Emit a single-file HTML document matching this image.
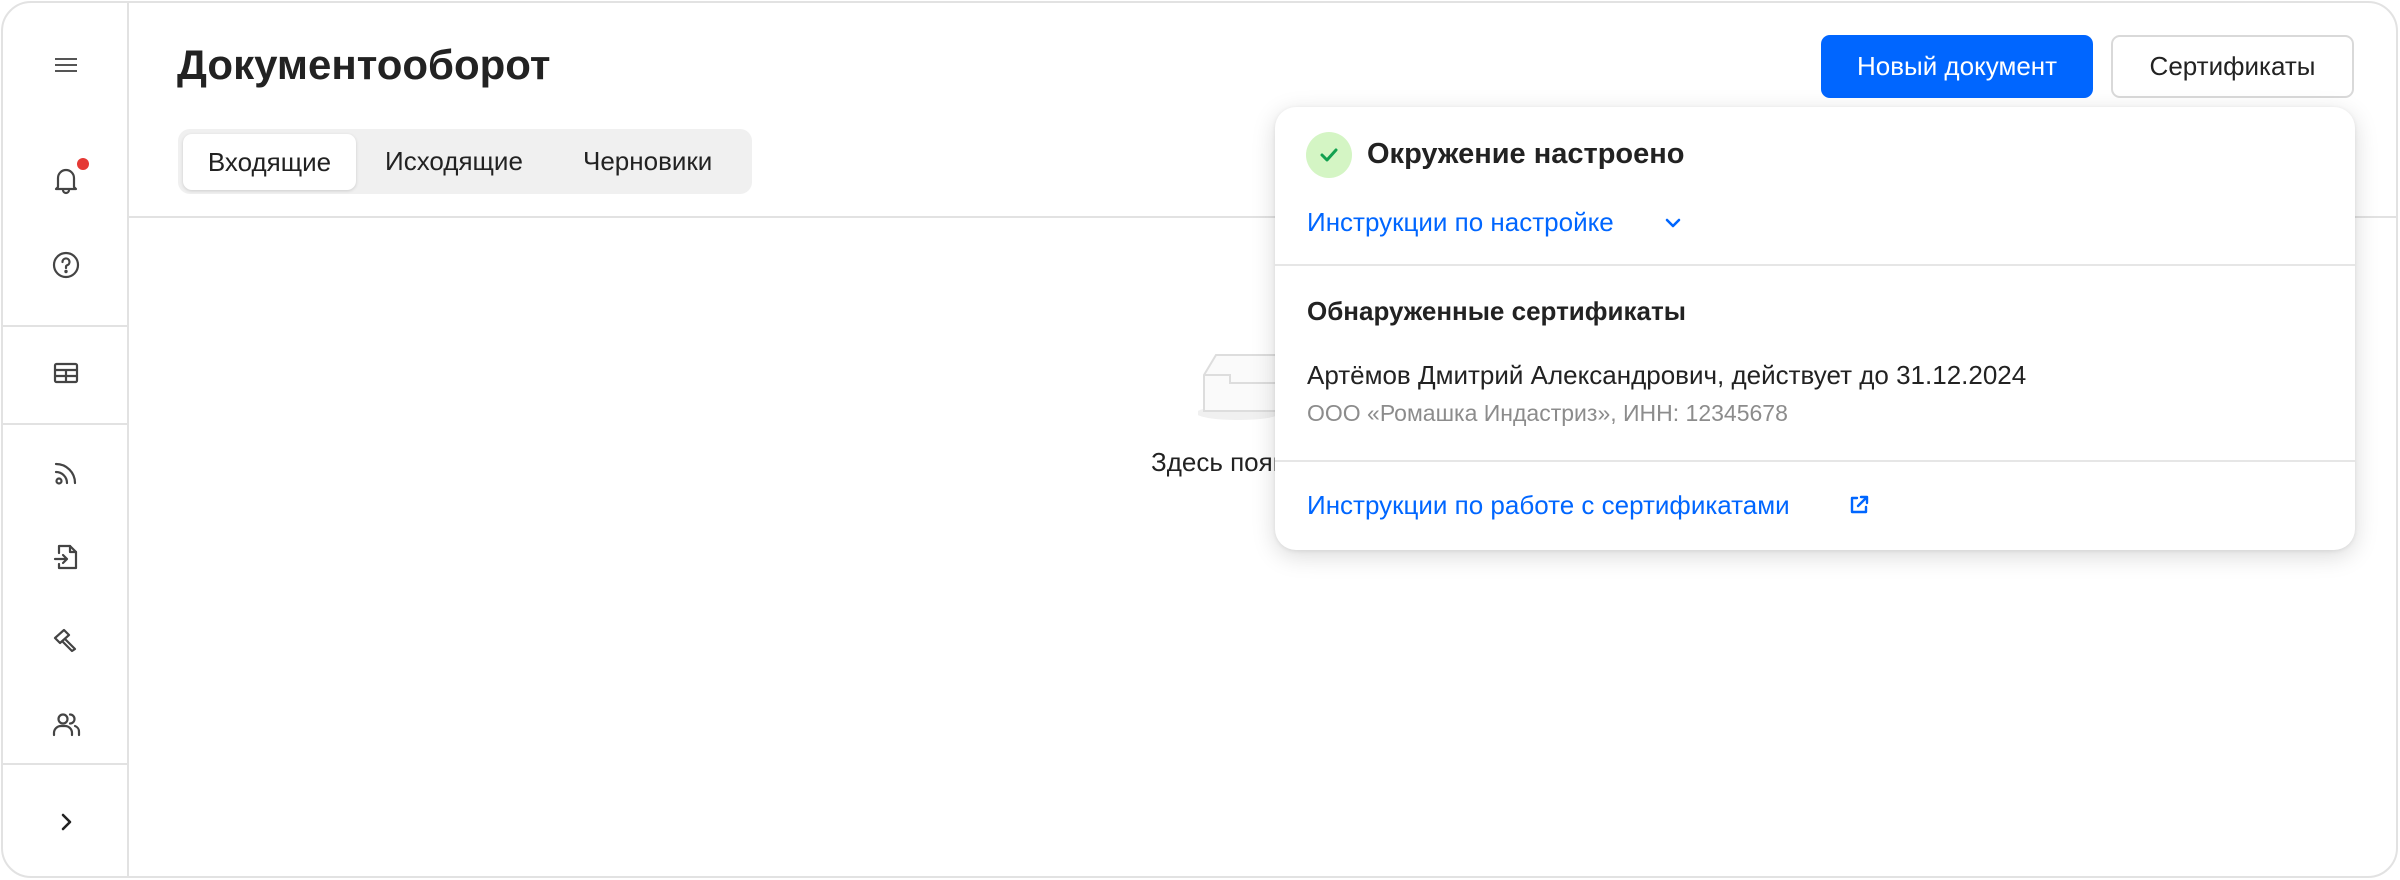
<!DOCTYPE html>
<html><head><meta charset="utf-8"><style>
*{box-sizing:border-box;margin:0;padding:0}
body{width:2400px;height:880px;background:#fff;font-family:"Liberation Sans",sans-serif;color:#222;position:relative;overflow:hidden}
.frame{position:absolute;left:1px;top:1px;width:2397px;height:877px;border:2px solid #e2e2e2;border-radius:30px;overflow:hidden}
.side{position:absolute;left:0;top:0;width:126px;height:100%;border-right:2px solid #e2e2e2}
.hr{position:absolute;left:0;width:126px;height:2px;background:#e2e2e2}
.ic{position:absolute;left:48px;width:30px;height:30px}
.abs{position:absolute;white-space:nowrap}
.tabs{position:absolute;left:175px;top:126px;width:574px;height:65px;background:#f0f0f0;border-radius:12px}
.tab{position:absolute;top:0;height:65px;line-height:65px;font-size:26px;color:#222}
.btn{position:absolute;top:32px;height:63px;border-radius:9px;font-size:26px;line-height:63px;text-align:center}
.pop{position:absolute;left:1272px;top:104px;width:1080px;height:443px;background:#fff;border-radius:21px;box-shadow:0 6px 24px rgba(0,0,0,.15),0 1px 4px rgba(0,0,0,.08)}
.blue{color:#0066ff}
</style></head><body>
<div class="frame">
<div class="side">
 <svg class="ic" style="top:47px" viewBox="0 0 30 30" fill="none" stroke="#555" stroke-width="2"><path d="M4 9h22M4 15h22M4 21h22"/></svg>
 <svg class="ic" style="top:162px" viewBox="0 0 30 30" fill="none" stroke="#444" stroke-width="2.2" stroke-linecap="round" stroke-linejoin="round"><path d="M7 22V13a8 8 0 0 1 16 0v9l2 2H5z"/><path d="M12 25a3 3 0 0 0 6 0"/></svg>
 <div class="abs" style="left:74px;top:155px;width:12px;height:12px;border-radius:50%;background:#e53935"></div>
 <svg class="ic" style="top:247px" viewBox="0 0 30 30" fill="none" stroke="#444" stroke-width="2.2" stroke-linecap="round"><circle cx="15" cy="15" r="12"/><path d="M11.5 12a3.5 3.5 0 1 1 4.5 3.3c-.7.3-1 .9-1 1.7v1"/><circle cx="15" cy="21.5" r=".6" fill="#444"/></svg>
 <div class="hr" style="top:322px"></div>
 <svg class="ic" style="top:355px" viewBox="0 0 30 30" fill="none" stroke="#444" stroke-width="2.2"><rect x="4" y="6" width="22" height="18" rx="1.5"/><path d="M4 12h22M4 18h22M15 12v12"/></svg>
 <div class="hr" style="top:420px"></div>
 <svg class="ic" style="top:455px" viewBox="0 0 30 30" fill="none" stroke="#444" stroke-width="2.2" stroke-linecap="round"><circle cx="8" cy="23" r="2.5"/><path d="M5 14a11 11 0 0 1 11 11M5 6a19 19 0 0 1 19 19"/></svg>
 <svg class="ic" style="top:539px" viewBox="0 0 30 30" fill="none" stroke="#444" stroke-width="2.2" stroke-linejoin="round" stroke-linecap="round"><path d="M8 11V4h11l6 6v16H8v-4"/><path d="M19 4v6h6"/><path d="M4 17h12M12 13l4 4-4 4"/></svg>
 <svg class="ic" style="top:622px" viewBox="0 0 30 30" fill="none" stroke="#444" stroke-width="2.2" stroke-linejoin="round"><path d="M4 13l9-8 5 5-9 8z"/><path d="M14 14l10 10-3 2-10-10"/></svg>
 <svg class="ic" style="top:706px" viewBox="0 0 30 30" fill="none" stroke="#444" stroke-width="2.2" stroke-linecap="round"><circle cx="12" cy="10" r="4.5"/><path d="M3 26v-2a7 7 0 0 1 7-7h4a7 7 0 0 1 7 7v2"/><path d="M19 5.5a4.5 4.5 0 0 1 0 9M24 17a6 6 0 0 1 4 6v3"/></svg>
 <div class="hr" style="top:760px"></div>
 <svg class="ic" style="top:804px" viewBox="0 0 30 30" fill="none" stroke="#222" stroke-width="2.6" stroke-linecap="round" stroke-linejoin="round"><path d="M12 8l7 7-7 7"/></svg>
</div>
<div class="abs" style="left:174px;top:38px;font-size:42px;font-weight:bold;color:#222">Документооборот</div>
<div class="tabs">
 <div class="tab" style="left:5px;top:5px;width:173px;height:56px;line-height:56px;background:#fff;border-radius:9px;box-shadow:0 1px 3px rgba(0,0,0,.15);text-align:center">Входящие</div>
 <div class="tab" style="left:207px">Исходящие</div>
 <div class="tab" style="left:405px">Черновики</div>
</div>
<div class="abs" style="left:126px;top:213px;width:2300px;height:2px;background:#e2e2e2"></div>
<div class="btn" style="left:1818px;width:272px;background:#0066ff;color:#fff">Новый документ</div>
<div class="btn" style="left:2108px;width:243px;border:2px solid #d9d9d9;color:#222;line-height:59px">Сертификаты</div>
<svg class="abs" style="left:1195px;top:340px" width="80" height="80" viewBox="0 0 80 80"><ellipse cx="40" cy="70" rx="42" ry="7" fill="#f0f0f0"/><path d="M6 32l12-20h60v56H6z" fill="#fafafa" stroke="#ddd" stroke-width="2"/><path d="M6 32h26v8h46" fill="none" stroke="#ddd" stroke-width="2"/></svg>
<div class="abs" style="left:1148px;top:444px;font-size:26px;color:#222">Здесь появятся документы</div>
<div class="pop">
 <div class="abs" style="left:31px;top:25px;width:46px;height:46px;border-radius:50%;background:#d4f5c4"></div>
 <svg class="abs" style="left:42px;top:36px" width="24" height="24" viewBox="0 0 24 24" fill="none" stroke="#12a150" stroke-width="3" stroke-linecap="round" stroke-linejoin="round"><path d="M5 12l5 5 9-10"/></svg>
 <div class="abs" style="left:92px;top:31px;font-size:29px;font-weight:bold;color:#222">Окружение настроено</div>
 <div class="abs blue" style="left:32px;top:100px;font-size:26px">Инструкции по настройке</div>
 <svg class="abs" style="left:388px;top:106px" width="20" height="20" viewBox="0 0 20 20" fill="none" stroke="#0066ff" stroke-width="2.6" stroke-linecap="round" stroke-linejoin="round"><path d="M4 7l6 6 6-6"/></svg>
 <div class="abs" style="left:0;top:157px;width:1080px;height:2px;background:#e6e6e6"></div>
 <div class="abs" style="left:32px;top:189px;font-size:26px;font-weight:bold;color:#222">Обнаруженные сертификаты</div>
 <div class="abs" style="left:32px;top:253px;font-size:26px;color:#222">Артёмов Дмитрий Александрович, действует до 31.12.2024</div>
 <div class="abs" style="left:32px;top:293px;font-size:23px;color:#8c8c8c">ООО «Ромашка Индастриз», ИНН: 12345678</div>
 <div class="abs" style="left:0;top:353px;width:1080px;height:2px;background:#e6e6e6"></div>
 <div class="abs blue" style="left:32px;top:383px;font-size:26px">Инструкции по работе с сертификатами</div>
 <svg class="abs" style="left:572px;top:386px" width="24" height="24" viewBox="0 0 24 24" fill="none" stroke="#0066ff" stroke-width="2.4" stroke-linecap="round" stroke-linejoin="round"><path d="M10 5H5v14h14v-5"/><path d="M14 4h6v6M20 4l-9 9"/></svg>
</div>
</div>
</body></html>
